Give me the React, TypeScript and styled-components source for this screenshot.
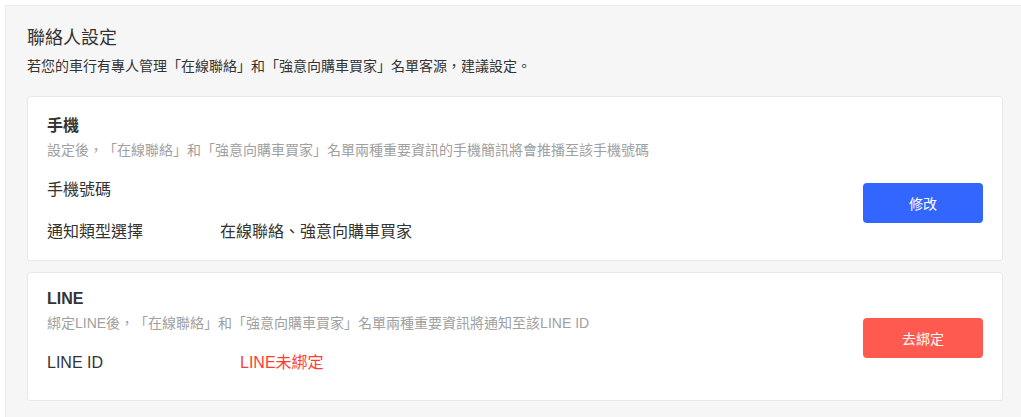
import React from 'react';
import styled, {createGlobalStyle} from 'styled-components';

const GlobalStyle = createGlobalStyle`
  html, body {
    margin: 0;
    padding: 0;
    overflow: hidden;
    background: #ffffff;
  }
  body {
    font-family: "Liberation Sans", "Noto Sans CJK TC", sans-serif;
    color: #333333;
    text-spacing-trim: space-all;
  }
`;

type ContactRow = { label: string; value: string; danger?: boolean };

type ContactCard = {
    id: string;
    title: string;
    desc: string;
    rows: ContactRow[];
    action: string;
    tone: 'primary' | 'danger';
    labelWidth: number;
    padTop: number;
    padBottom: number;
    nudge: number;
};

const cards: ContactCard[] = [
    {
        id: 'phone',
        title: '手機',
        desc: '設定後，「在線聯絡」和「強意向購車買家」名單兩種重要資訊的手機簡訊將會推播至該手機號碼',
        rows: [
            {label: '手機號碼', value: ''},
            {label: '通知類型選擇', value: '在線聯絡、強意向購車買家'},
        ],
        action: '修改',
        tone: 'primary',
        labelWidth: 173,
        padTop: 18,
        padBottom: 17,
        nudge: 47,
    },
    {
        id: 'line',
        title: 'LINE',
        desc: '綁定LINE後，「在線聯絡」和「強意向購車買家」名單兩種重要資訊將通知至該LINE ID',
        rows: [
            {label: 'LINE ID', value: 'LINE未綁定', danger: true},
        ],
        action: '去綁定',
        tone: 'danger',
        labelWidth: 193,
        padTop: 15,
        padBottom: 26,
        nudge: 14,
    },
];

export default function App() {
    return (
        <>
            <GlobalStyle/>
            <Panel>
                <PanelTitle>聯絡人設定</PanelTitle>
                <PanelSub>若您的車行有專人管理「在線聯絡」和「強意向購車買家」名單客源，建議設定。</PanelSub>
                <CardList>
                    {cards.map(card => (
                        <Card key={card.id} $padTop={card.padTop} $padBottom={card.padBottom}>
                            <CardBody>
                                <CardTitle>{card.title}</CardTitle>
                                <CardDesc>{card.desc}</CardDesc>
                                <Rows>
                                    {card.rows.map(row => (
                                        <Row key={row.label}>
                                            <RowLabel $width={card.labelWidth}>{row.label}</RowLabel>
                                            <RowValue $danger={row.danger}>{row.value}</RowValue>
                                        </Row>
                                    ))}
                                </Rows>
                            </CardBody>
                            <ActionButton $tone={card.tone} $nudge={card.nudge}>{card.action}</ActionButton>
                        </Card>
                    ))}
                </CardList>
            </Panel>
        </>
    );
}

const Panel = styled.section`
  box-sizing: border-box;
  height: calc(100vh - 4px);
  margin: 5px -5px 0 5px;
  padding: 19px 22px 0 21px;
  background: #f6f6f6;
  border: 1px solid #ebebeb;
  overflow: hidden;
`;

const PanelTitle = styled.h2`
  margin: 0;
  font-size: 18px;
  line-height: 26px;
  font-weight: 400;
  color: #333333;
`;

const PanelSub = styled.p`
  margin: 5px 0 0;
  font-size: 14px;
  line-height: 20px;
  color: #333333;
`;

const CardList = styled.div`
  margin-top: 20px;
  display: flex;
  flex-direction: column;
  gap: 11px;
`;

const Card = styled.div<{ $padTop: number; $padBottom: number }>`
  display: flex;
  align-items: center;
  justify-content: space-between;
  background: #ffffff;
  border: 1px solid #e8e8e8;
  border-radius: 3px;
  padding: ${p => p.$padTop}px 19px ${p => p.$padBottom}px 19px;
`;

const CardBody = styled.div`
  display: flex;
  flex-direction: column;
`;

const CardTitle = styled.h3`
  margin: 0;
  font-size: 16px;
  line-height: 22px;
  font-weight: 700;
  color: #333333;
`;

const CardDesc = styled.p`
  margin: 3px 0 0;
  font-size: 14px;
  line-height: 20px;
  color: #a0a0a0;
`;

const Rows = styled.div`
  margin-top: 19px;
  display: flex;
  flex-direction: column;
  gap: 20px;
`;

const Row = styled.div`
  display: flex;
  align-items: center;
  font-size: 16px;
  line-height: 22px;
`;

const RowLabel = styled.span<{ $width: number }>`
  width: ${p => p.$width}px;
  flex-shrink: 0;
  color: #333333;
`;

const RowValue = styled.span<{ $danger?: boolean }>`
  color: ${p => p.$danger ? '#ff3b36' : '#333333'};
`;

const ActionButton = styled.button<{ $tone: 'primary' | 'danger'; $nudge: number }>`
  width: 120px;
  height: 40px;
  margin-top: ${p => p.$nudge}px;
  border: none;
  border-radius: 4px;
  background: ${p => p.$tone === 'primary' ? '#3366ff' : '#ff5a4f'};
  color: #ffffff;
  font-family: "Liberation Sans", "Noto Sans CJK TC", sans-serif;
  font-size: 14px;
  cursor: pointer;
  flex-shrink: 0;
`;
